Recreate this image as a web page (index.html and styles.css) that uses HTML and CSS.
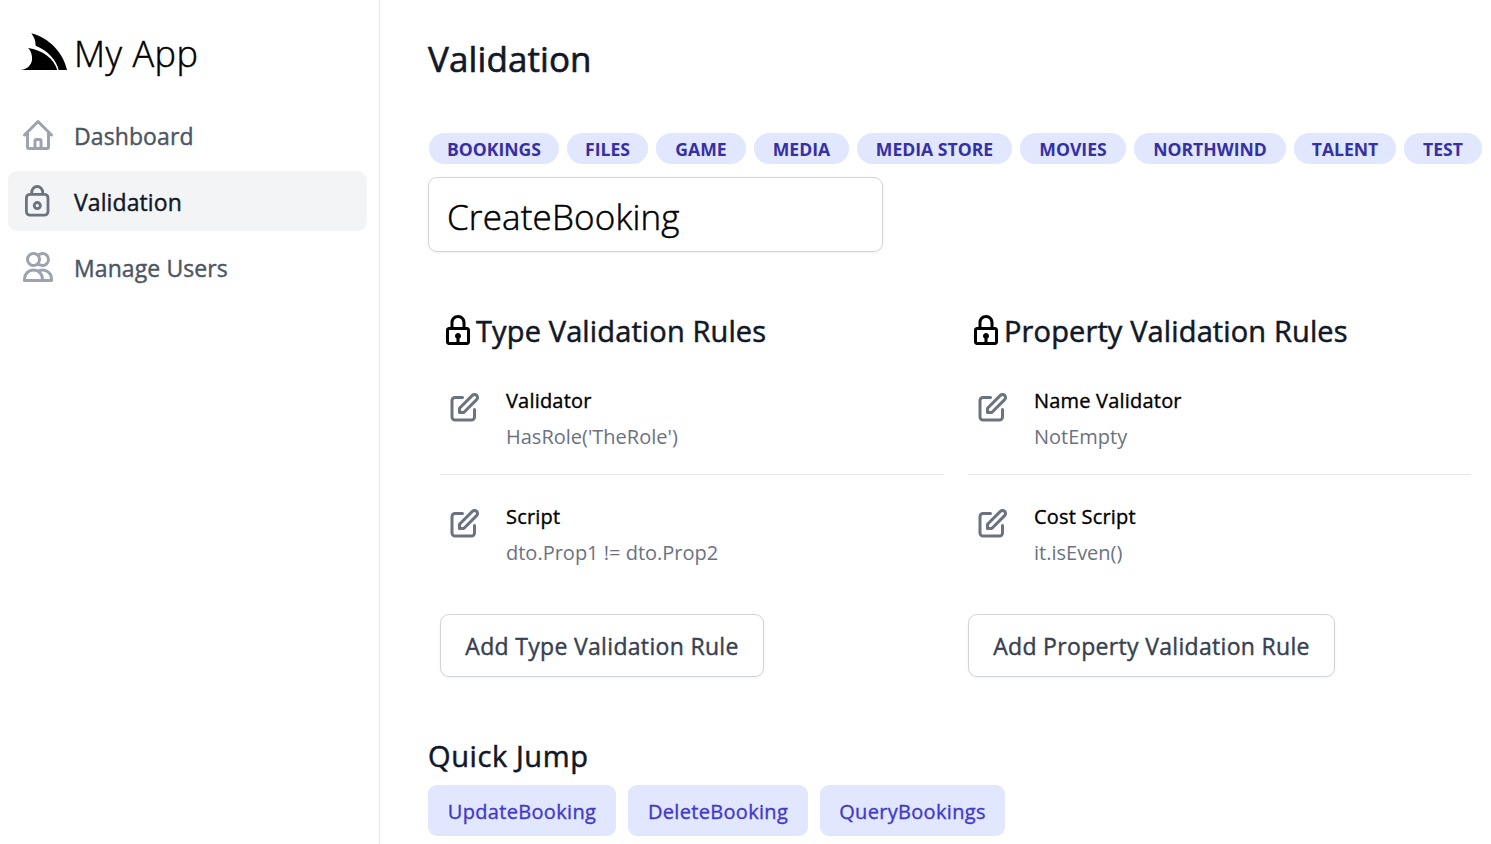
FILE: index.html
```
<!DOCTYPE html>
<html lang="en">
<head>
<meta charset="utf-8">
<title>Validation - My App</title>
<link rel="stylesheet" href="styles.css">
</head>
<body>
<svg class="defs" aria-hidden="true">
  <symbol id="edit" viewBox="0 0 24 24"><path fill="none" stroke="currentColor" stroke-width="2" stroke-linecap="round" stroke-linejoin="round" d="M11 5H6a2 2 0 00-2 2v11a2 2 0 002 2h11a2 2 0 002-2v-5m-1.414-9.414a2 2 0 112.828 2.828L11.828 15H9v-2.828l8.586-8.586z"/></symbol>
  <symbol id="lock" viewBox="0 0 24 24"><path fill="currentColor" d="M12 2C9.243 2 7 4.243 7 7v3H6c-1.103 0-2 .897-2 2v8c0 1.103.897 2 2 2h12c1.103 0 2-.897 2-2v-8c0-1.103-.897-2-2-2h-1V7c0-2.757-2.243-5-5-5zM9 7c0-1.654 1.346-3 3-3s3 1.346 3 3v3H9V7zm9.002 13H13v-2.278c.595-.347 1-.985 1-1.722 0-1.103-.897-2-2-2s-2 .897-2 2c0 .736.405 1.375 1 1.722V20H6v-8h12l.002 8z"/></symbol>
</svg>
<div class="app">
  <aside class="sidebar">
    <a class="brand">
      <svg class="logo" viewBox="60 36 144 117"><path d="M94 40C150 55 190 100 201 150H176C170 121 142 90 107 77C107 62 102 50 94 40ZM84 84C127 90 162 116 172 150H62C86 147 98 131 96 111C95 99 91 91 84 84Z"/></svg>
      <span class="brand-name">My App</span>
    </a>
    <nav class="nav">
      <a class="nav-item">
        <svg class="icon" viewBox="0 0 24 24" fill="none" stroke="currentColor" stroke-width="2" stroke-linecap="round" stroke-linejoin="round"><path d="M3 12l2-2m0 0l7-7 7 7M5 10v10a1 1 0 001 1h3m10-11l2 2m-2-2v10a1 1 0 01-1 1h-3m-6 0a1 1 0 001-1v-4a1 1 0 011-1h2a1 1 0 011 1v4a1 1 0 001 1m-6 0h6"/></svg>
        <span class="medium">Dashboard</span>
      </a>
      <a class="nav-item active">
        <svg class="icon" viewBox="0 0 36 36" fill="none" stroke="currentColor" stroke-width="2.8"><rect x="6.4" y="11.3" width="21.6" height="20.9" rx="3.6"/><path d="M11.7 11.3V9.4a5.5 5.9 0 0111 0V11.3"/><circle cx="17.3" cy="22.6" r="3.1"/></svg>
        <span class="medium">Validation</span>
      </a>
      <a class="nav-item">
        <svg class="icon" viewBox="0 0 24 24" fill="none" stroke="currentColor" stroke-width="2" stroke-linecap="round" stroke-linejoin="round"><path d="M12 4.354a4 4 0 110 5.292M15 21H3v-1a6 6 0 0112 0v1zm0 0h6v-1a6 6 0 00-9-5.197M13 7a4 4 0 11-8 0 4 4 0 018 0z"/></svg>
        <span class="medium">Manage Users</span>
      </a>
    </nav>
  </aside>
  <main class="main">
    <h1 class="title medium">Validation</h1>
    <div class="tags">
      <span class="tag tag-bookings">BOOKINGS</span>
      <span class="tag tag-files">FILES</span>
      <span class="tag tag-game">GAME</span>
      <span class="tag tag-media">MEDIA</span>
      <span class="tag tag-store">MEDIA STORE</span>
      <span class="tag tag-movies">MOVIES</span>
      <span class="tag tag-northwind">NORTHWIND</span>
      <span class="tag tag-talent">TALENT</span>
      <span class="tag tag-test">TEST</span>
    </div>
    <div class="field"><span>CreateBooking</span></div>
    <div class="columns">
      <section class="rules">
        <h2 class="rules-title"><svg class="icon"><use href="#lock"/></svg><span class="medium">Type Validation Rules</span></h2>
        <div class="rule">
          <svg class="icon"><use href="#edit"/></svg>
          <div><p class="rule-name medium">Validator</p><p class="rule-body">HasRole('TheRole')</p></div>
        </div>
        <div class="rule">
          <svg class="icon"><use href="#edit"/></svg>
          <div><p class="rule-name medium">Script</p><p class="rule-body">dto.Prop1 != dto.Prop2</p></div>
        </div>
        <button class="add add-type medium">Add Type Validation Rule</button>
      </section>
      <section class="rules">
        <h2 class="rules-title"><svg class="icon"><use href="#lock"/></svg><span class="medium">Property Validation Rules</span></h2>
        <div class="rule">
          <svg class="icon"><use href="#edit"/></svg>
          <div><p class="rule-name medium">Name Validator</p><p class="rule-body">NotEmpty</p></div>
        </div>
        <div class="rule">
          <svg class="icon"><use href="#edit"/></svg>
          <div><p class="rule-name medium">Cost Script</p><p class="rule-body">it.isEven()</p></div>
        </div>
        <button class="add add-property medium">Add Property Validation Rule</button>
      </section>
    </div>
    <h2 class="jump-title medium">Quick Jump</h2>
    <div class="jumps">
      <a class="jump jump-update medium">UpdateBooking</a>
      <a class="jump jump-delete medium">DeleteBooking</a>
      <a class="jump jump-query medium">QueryBookings</a>
    </div>
  </main>
</div>
</body>
</html>
```
FILE: styles.css
```
* { box-sizing: border-box; }
body { margin: 0; background: #fff; color: #000; font-family: "Open Sans", "Noto Sans", sans-serif; overflow: hidden; }
h1, h2, p { margin: 0; font-weight: 500; }
.defs { display: none; }
.icon { width: 36px; height: 36px; flex: none; }
/* half-step weight between regular and semibold */
.medium { -webkit-text-stroke: 0.018em currentColor; }
.app { display: flex; height: 844px; white-space: nowrap; }

.sidebar { width: 380px; flex: none; border-right: 1px solid #e5e7eb; }
.brand { display: flex; height: 105px; padding: 32px 0 0 20px; }
.logo { width: 48px; height: 39px; }
.brand-name { margin-left: 6px; font-size: 36px; line-height: 43px; font-weight: 300; letter-spacing: .5px; -webkit-text-stroke: .5px #000; }
.nav { display: flex; flex-direction: column; gap: 6px; padding: 0 12px 0 8px; }
.nav-item { display: flex; align-items: center; gap: 18px; height: 60px; padding-left: 12px; border-radius: 9px; color: #9ca3af; font-size: 23px; font-weight: 500; letter-spacing: .1px; }
.nav-item span { color: #4b5563; padding-top: 2px; }
.nav-item.active { background: #f3f4f6; color: #6b7280; }
.nav-item.active span { color: #111827; }

.main { flex: 1; min-width: 0; padding: 35px 0 0 48px; }
.title { font-size: 35px; line-height: 48px; color: #111827; letter-spacing: .1px; }
.tags { display: flex; gap: 8px; margin: 50px 0 13px 1px; }
.tag { flex: none; height: 31px; border-radius: 16px; background: #e0e7ff; color: #3730a3; font-size: 17.6px; font-weight: 700; line-height: 33px; text-align: center; }
.tag-bookings { width: 130px; }
.tag-files { width: 81px; }
.tag-game { width: 90px; }
.tag-media { width: 95px; }
.tag-store { width: 155px; }
.tag-movies { width: 106px; }
.tag-northwind { width: 152px; }
.tag-talent { width: 102px; }
.tag-test { width: 78px; }
.field { width: 455px; height: 75px; padding: 3px 0 0 18px; border: 1px solid #d1d5db; border-radius: 9px; box-shadow: 0 1px 3px rgba(0,0,0,.06); font-size: 35px; line-height: 72px; font-weight: 300; letter-spacing: .15px; -webkit-text-stroke: .5px #000; }

.columns { display: grid; grid-template-columns: 504px 503px; gap: 24px; margin: 60px 0 0 12px; }
.rules-title { display: flex; align-items: center; height: 36px; font-size: 29px; line-height: 36px; letter-spacing: .13px; }
.rules-title span { color: #111827; padding-top: 2px; }
.rule { display: flex; gap: 24px; height: 116px; padding: 31px 0 0 6px; }
.rule:nth-of-type(1) { height: 127px; padding-top: 42px; border-bottom: 1px solid #e5e7eb; }
.rule .icon { color: #6b7280; }
.rule-name { margin-top: -1px; font-size: 20px; line-height: 24px; letter-spacing: .2px; }
.rule-body { margin-top: 12px; font-size: 20px; line-height: 24px; font-weight: 400; color: #6b7280; }
.add { display: block; height: 63px; margin-top: 23px; padding: 0; border: 1px solid #d1d5db; border-radius: 9px; background: #fff; box-shadow: 0 1px 3px rgba(0,0,0,.06); color: #374151; font: 500 23px "Open Sans", sans-serif; letter-spacing: .32px; }
.add-type { width: 324px; }
.add-property { width: 367px; }

.jump-title { margin-top: 59px; font-size: 29px; line-height: 40px; color: #111827; letter-spacing: .6px; }
.jumps { display: flex; gap: 12px; margin-top: 9px; }
.jump { height: 51px; border-radius: 9px; background: #e0e7ff; color: #4338ca; font-size: 20px; font-weight: 500; line-height: 53px; text-align: center; letter-spacing: .32px; }
.jump-update { width: 188px; }
.jump-delete { width: 180px; }
.jump-query { width: 185px; }
```
